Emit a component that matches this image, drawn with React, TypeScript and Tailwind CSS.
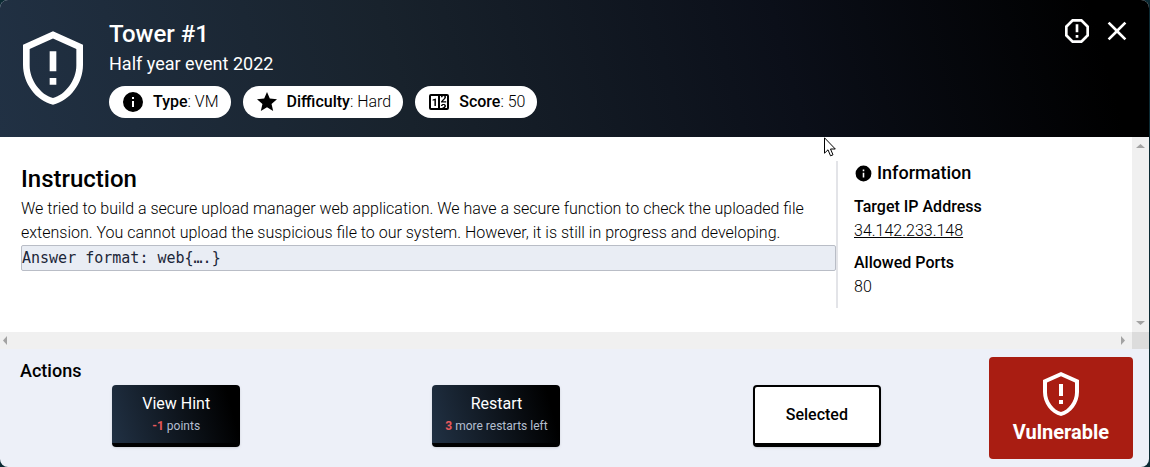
import type { ReactNode } from "react";

const paths = {
  shield:
    "M21,11C21,16.55 17.16,21.74 12,23C6.84,21.74 3,16.55 3,11V5L12,1L21,5V11M12,21C15.75,20 19,15.54 19,11.22V6.3L12,3.18L5,6.3V11.22C5,15.54 8.25,20 12,21M11,7H13V13H11V7M11,15H13V17H11V15Z",
  octagon:
    "M8.27,3L3,8.27V15.73L8.27,21H15.73C17.5,19.24 21,15.73 21,15.73V8.27L15.73,3M9.1,5H14.9L19,9.1V14.9L14.9,19H9.1L5,14.9V9.1M11,15H13V17H11V15M11,7H13V13H11V7",
  close:
    "M19,6.41L17.59,5L12,10.59L6.41,5L5,6.41L10.59,12L5,17.59L6.41,19L12,13.41L17.59,19L19,17.59L13.41,12L19,6.41Z",
  info: "M13,9H11V7H13M13,17H11V11H13M12,2A10,10 0 0,0 2,12A10,10 0 0,0 12,22A10,10 0 0,0 22,12A10,10 0 0,0 12,2Z",
  star: "M12,17.27L18.18,21L16.54,13.97L22,9.24L14.81,8.62L12,2L9.19,8.62L2,9.24L7.45,13.97L5.82,21L12,17.27Z",
  counter:
    "M4,4H20A2,2 0 0,1 22,6V18A2,2 0 0,1 20,20H4A2,2 0 0,1 2,18V6A2,2 0 0,1 4,4M4,6V18H11V6H4M20,18V6H18.76C19,6.54 18.95,7.07 18.95,7.13C18.88,7.8 18.41,8.5 18.24,8.75L15.91,11.3L19.23,11.28L19.24,12.5L14.04,12.47L14,11.47C14,11.47 17.05,8.24 17.2,7.95C17.34,7.67 17.91,6 16.5,6C15.27,6.05 15.41,7.3 15.41,7.3L13.87,7.31C13.87,7.31 13.88,6.65 14.25,6H13V18H15.58L15.57,17.14L16.54,17.13C16.54,17.13 17.45,16.97 17.46,16.08C17.5,15.08 16.65,15.08 16.5,15.08C16.37,15.08 15.43,15.13 15.43,15.95H13.91C13.91,15.95 13.95,13.89 16.5,13.89C19.1,13.89 18.96,15.91 18.96,15.91C18.96,15.91 19,17.16 17.85,17.63L18.37,18H20M8.92,16H7.42V10.2L5.62,10.76V9.53L8.76,8.41H8.92V16Z",
};

function Icon({ name, className }: { name: keyof typeof paths; className: string }) {
  return (
    <svg viewBox="0 0 24 24" fill="currentColor" aria-hidden="true" className={className}>
      <path d={paths[name]} />
    </svg>
  );
}

function Pill({ icon, label, value }: { icon: keyof typeof paths; label: string; value: string }) {
  return (
    <li className="flex h-8 items-center gap-2 rounded-full bg-white px-3 text-black">
      <Icon name={icon} className="size-6" />
      <span className="font-light">
        <span className="font-medium">{label}</span>: {value}
      </span>
    </li>
  );
}

function ActionButton({ title, count, note }: { title: string; count: string; note: string }) {
  return (
    <button
      type="button"
      className="flex h-[62px] w-32 flex-col items-center justify-center rounded border-b-4 border-black bg-[linear-gradient(75deg,#213144,#000_90%)] text-white shadow"
    >
      <span className="leading-6">{title}</span>
      <span className="text-xs leading-5 text-[#b4bfd0]">
        <span className="font-bold text-[#e8595c]">{count}</span> {note}
      </span>
    </button>
  );
}

function Arrow({ points }: { points: string }) {
  return (
    <svg viewBox="0 0 17 17" fill="#a3a3a3" aria-hidden="true" className="size-[17px]">
      <polygon points={points} />
    </svg>
  );
}

function Detail({ label, children }: { label: string; children: ReactNode }) {
  return (
    <div className="mt-2 leading-6">
      <dt className="font-medium">{label}</dt>
      <dd className="font-light">{children}</dd>
    </div>
  );
}

export default function App() {
  return (
    <div className="bg-[#0b2a33] pr-px pb-px font-['Roboto',sans-serif] text-base text-black">
      <section className="relative overflow-hidden rounded-lg bg-[#edf0f8]">
        <header className="flex min-h-[137px] items-center gap-4 bg-[linear-gradient(75deg,#213144,#18222c_35%,#0b0f19_68%,#000_95%)] pr-4 pb-0.5 pl-[13px] text-white">
          <Icon name="shield" className="size-20 shrink-0" />
          <div className="flex-1">
            <h1 className="text-2xl leading-8 font-medium">Tower #1</h1>
            <p className="text-lg leading-7">Half year event 2022</p>
            <ul className="mt-2 flex flex-wrap gap-3">
              <Pill icon="info" label="Type" value="VM" />
              <Pill icon="star" label="Difficulty" value="Hard" />
              <Pill icon="counter" label="Score" value="50" />
            </ul>
          </div>
          <div className="flex gap-2 self-start pt-[15px]">
            <button type="button" aria-label="Report">
              <Icon name="octagon" className="size-8" />
            </button>
            <button type="button" aria-label="Close">
              <Icon name="close" className="size-8" />
            </button>
          </div>
        </header>

        <div className="grid grid-cols-[1fr_17px] bg-white">
          <div className="flex min-h-[195px] py-6 pl-[21px]">
            <article className="min-w-0 flex-1">
              <h2 className="text-2xl leading-9 font-medium">Instruction</h2>
              <p className="leading-6 font-light">
                We tried to build a secure upload manager web application. We have a secure function to check the
                uploaded file extension. You cannot upload the suspicious file to our system. However, it is still in
                progress and developing.
              </p>
              <pre className="rounded-xs border border-[#b9bdc6] bg-[#e9edf4] font-['DejaVu_Sans_Mono',monospace] text-[15px] leading-6 text-[#1b2638]">
                Answer format: web{"{….}"}
              </pre>
            </article>
            <aside className="w-[296px] border-l-2 border-[#e3e4e8] pl-4">
              <h2 className="flex items-center gap-1 text-lg leading-6 font-medium">
                <Icon name="info" className="size-[19px]" />
                Information
              </h2>
              <dl className="pt-0.5">
                <Detail label="Target IP Address">
                  <a href="http://34.142.233.148" className="underline">
                    34.142.233.148
                  </a>
                </Detail>
                <Detail label="Allowed Ports">80</Detail>
              </dl>
            </aside>
          </div>
          <div className="flex flex-col justify-between bg-[#f0f0f0]">
            <Arrow points="4,11 8.5,7 13,11" />
            <Arrow points="4,6 8.5,10 13,6" />
          </div>
          <div className="flex justify-between bg-[#f0f0f0]">
            <Arrow points="7,4 3,8.5 7,13" />
            <Arrow points="6,4 10,8.5 6,13" />
          </div>
          <div className="bg-[#dcdcdc]" />
        </div>

        <footer className="flex gap-3 px-4 py-2">
          <div className="flex-1">
            <h2 className="pl-1 text-lg leading-7 font-medium">Actions</h2>
            <div className="grid grid-cols-3 justify-items-center">
              <ActionButton title="View Hint" count="-1" note="points" />
              <ActionButton title="Restart" count="3" note="more restarts left" />
              <button
                type="button"
                className="h-[62px] w-32 rounded border-2 border-b-4 border-black bg-white font-medium shadow"
              >
                Selected
              </button>
            </div>
          </div>
          <div className="flex h-[102px] w-36 flex-col items-center justify-center rounded bg-[#a91d12] text-white">
            <Icon name="shield" className="size-12" />
            <strong className="text-xl leading-7 font-bold">Vulnerable</strong>
          </div>
        </footer>

        <svg
          viewBox="0 0 12 20"
          aria-hidden="true"
          className="absolute top-[137px] left-[824px] h-5 w-3 fill-white stroke-black"
        >
          <path d="M.5 .8V16.2L4 12.8L6.5 18.8L9 17.8L6.5 12H11.3Z" />
        </svg>
      </section>
    </div>
  );
}
